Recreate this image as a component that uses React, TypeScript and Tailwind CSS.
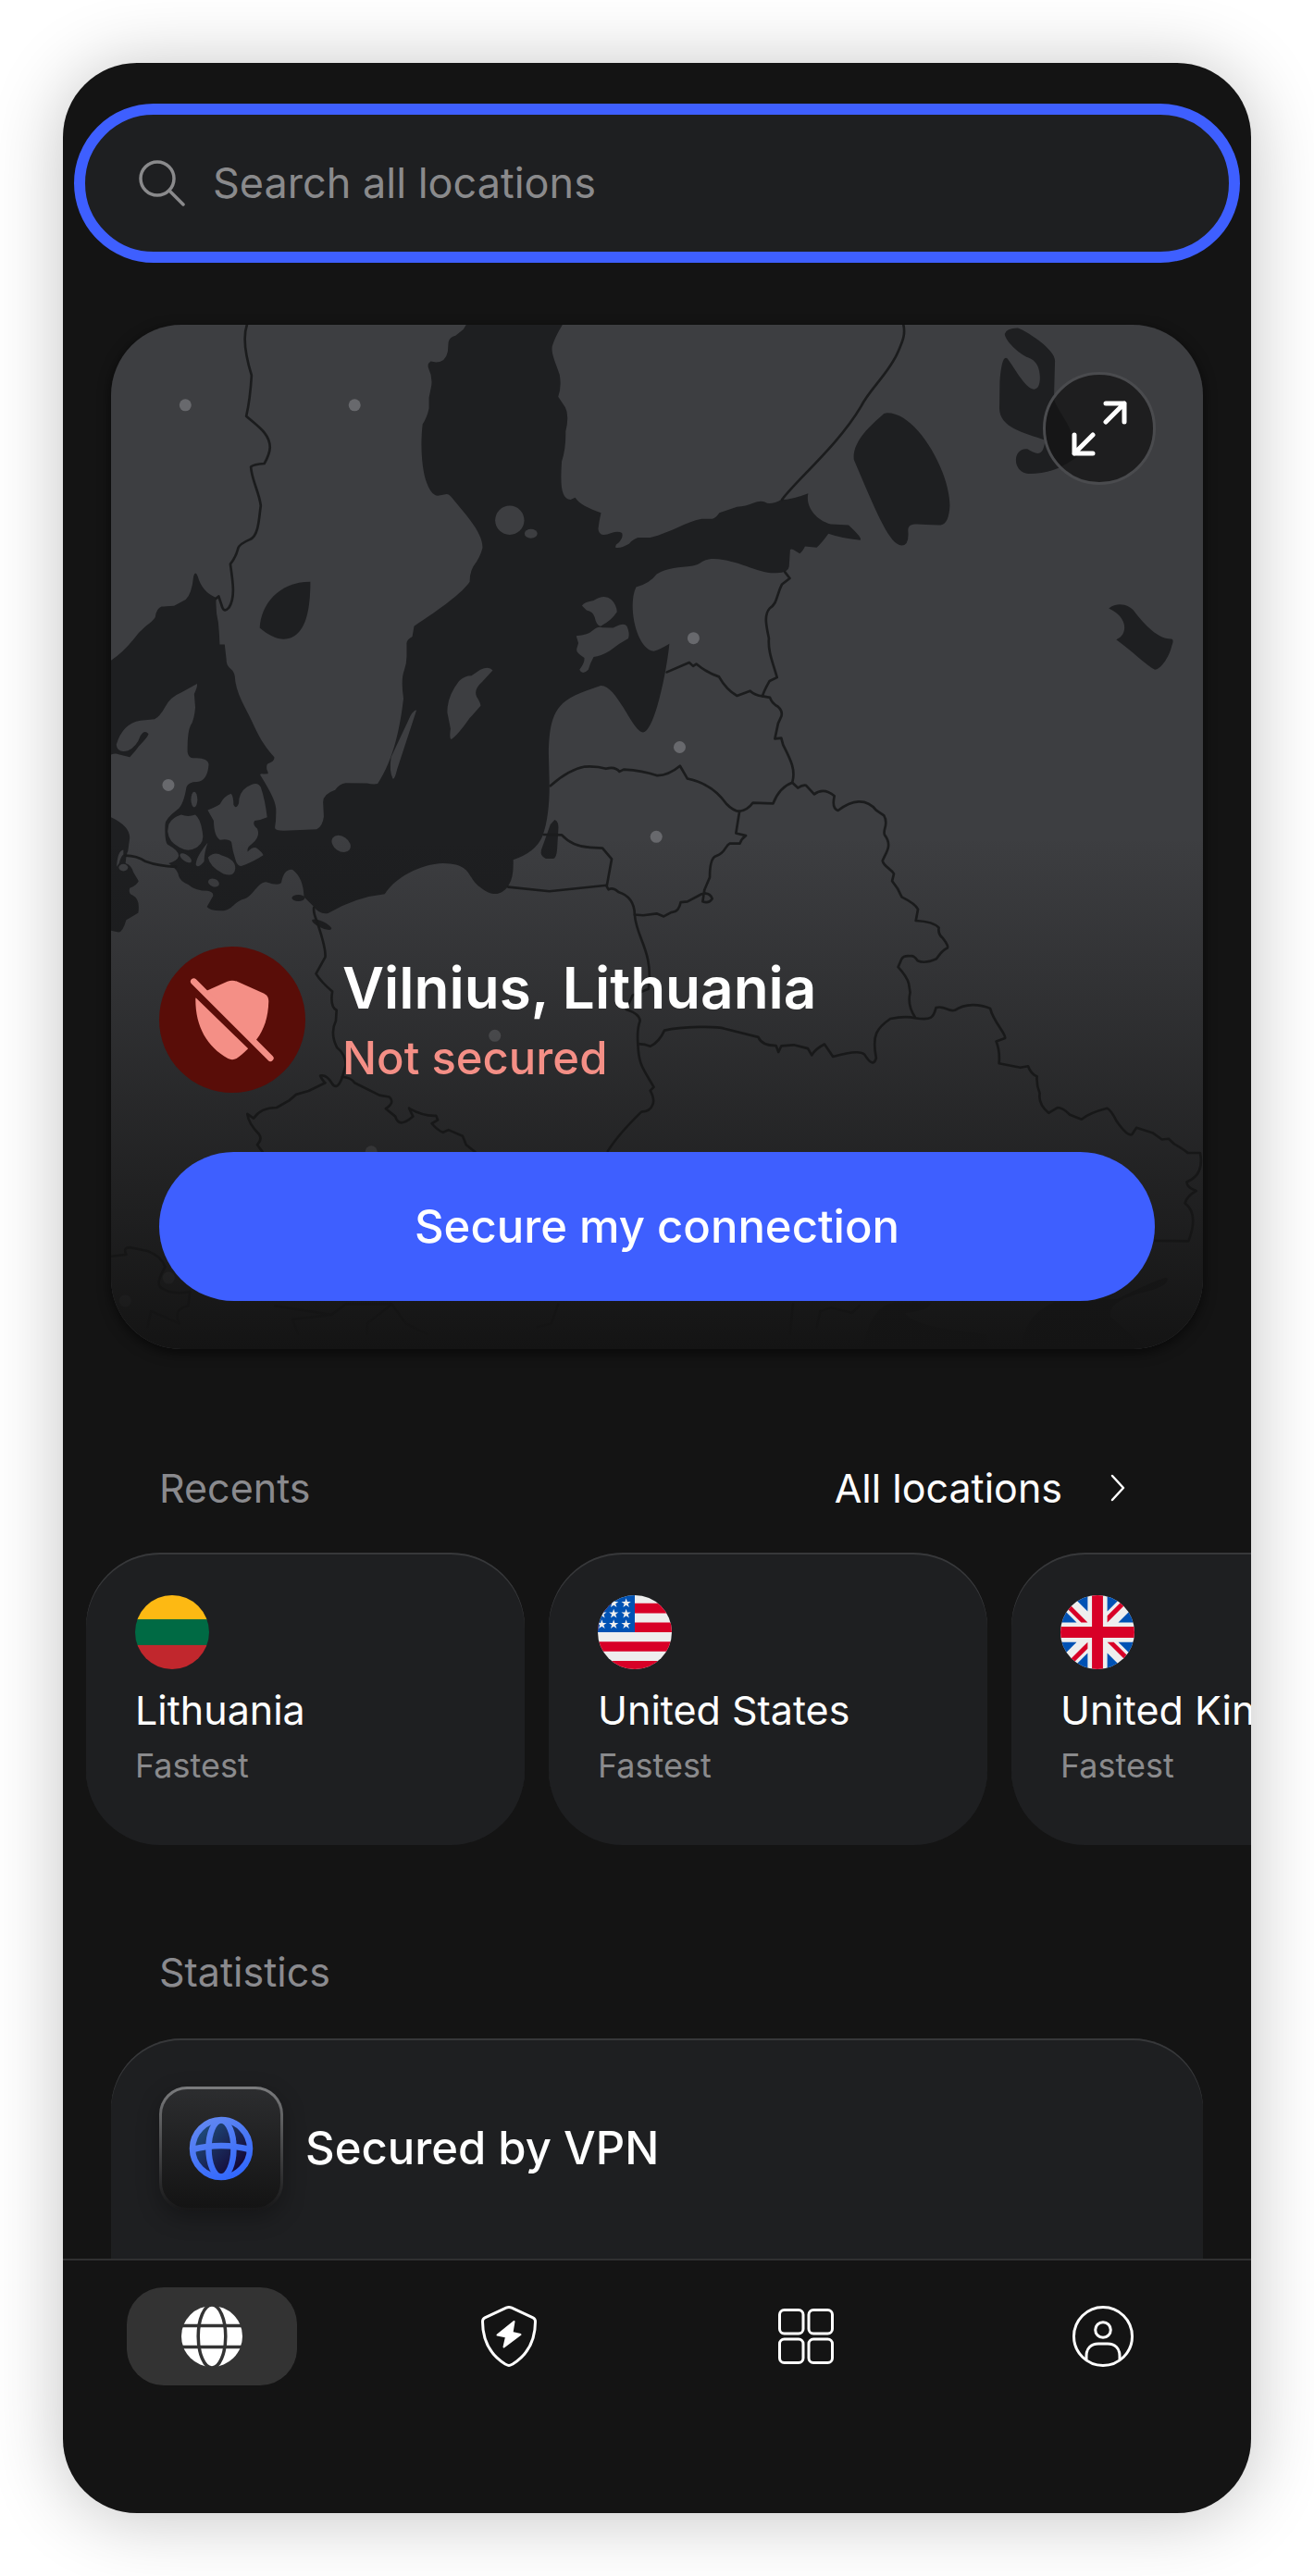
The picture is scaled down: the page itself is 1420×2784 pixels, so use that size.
import React from "react";

interface FlagProps {
  className?: string;
}

interface RecentLocation {
  name: string;
  detail: string;
  Flag: React.FC<FlagProps>;
}

const LithuaniaFlag: React.FC<FlagProps> = ({ className }) => (
  <svg viewBox="0 0 512 512" className={className} aria-hidden="true">
    <rect width="512" height="170" fill="#fdb913" />
    <rect y="167" width="512" height="180" fill="#006a44" />
    <rect y="345" width="512" height="167" fill="#c1272d" />
  </svg>
);

const stars = [
  [28, 54],
  [110, 54],
  [196, 54],
  [28, 128],
  [110, 128],
  [196, 128],
  [28, 202],
  [110, 202],
  [196, 202],
];

const UnitedStatesFlag: React.FC<FlagProps> = ({ className }) => (
  <svg viewBox="0 0 512 512" className={className} aria-hidden="true">
    <rect width="512" height="512" fill="#eee" />
    <path
      fill="#d80027"
      d="M0 56h512v68H0zM0 188h512v68H0zM0 322h512v66H0zM0 454h512v58H0z"
    />
    <rect width="256" height="256" fill="#0052b4" />
    {stars.map(([x, y]) => (
      <path
        key={`${x}-${y}`}
        transform={`translate(${x} ${y})`}
        fill="#eee"
        d="M0-34 8-10h25L13 5l8 24L0 14l-21 15 8-24-20-15h25z"
      />
    ))}
  </svg>
);

const UnitedKingdomFlag: React.FC<FlagProps> = ({ className }) => (
  <svg viewBox="0 0 512 512" className={className} aria-hidden="true">
    <rect width="512" height="512" fill="#eee" />
    <path
      fill="#0052b4"
      d="M324 0v112L436 0ZM512 76 400 188h112zM0 188h112L0 76ZM76 0l112 112V0Zm112 512V400L76 512ZM0 436l112-112H0Zm512-112H400l112 112ZM436 512 324 400v112z"
    />
    <path
      fill="#d80027"
      d="M0 0v45l143 143h45L0 0zm218 0v218H0v76h218v218h76V294h218v-76H294V0h-76zm249 0L324 143v45L512 0h-45zM188 324 0 512h45l143-143v-45zm136 0 188 188v-45L369 324h-45z"
    />
  </svg>
);

const recents: RecentLocation[] = [
  { name: "Lithuania", detail: "Fastest", Flag: LithuaniaFlag },
  { name: "United States", detail: "Fastest", Flag: UnitedStatesFlag },
  { name: "United Kingdom", detail: "Fastest", Flag: UnitedKingdomFlag },
];

const serverDots = [
  [237, 256],
  [715, 256],
  [189, 1329],
  [1672, 914],
  [1633, 1222],
  [1567, 1475],
  [1111, 2037],
  [762, 2365],
  [190, 2721],
  [67, 2786],
];

const BalticMap = () => (
  <svg
    viewBox="27 29 3084 2893"
    preserveAspectRatio="xMidYMid slice"
    className="absolute inset-0 w-full h-full"
    aria-hidden="true"
  >
    <rect x="27" y="29" width="3084" height="2893" fill="#3d3e41" />
    <g fill="#1e1f21" strokeLinejoin="round">
      {/* Baltic sea with the gulfs */}
      <path
        d="M1030 29 1022 42 1000 60Q983 64 980 78L978 105Q972 135 945 135L930 132Q920 138 923 150 935 175 932 200L925 235V265Q920 290 907 310
        C900 370 905 430 915 465Q930 512 950 512L975 507Q982 507 990 518L1030 566C1060 603 1078 635 1076 660Q1070 685 1050 712 1040 730 1040 755
        C1020 785 960 830 883 880L878 910Q860 920 862 932L862 965Q862 985 855 1005 845 1030 853 1085C845 1150 830 1250 780 1325Q770 1328 750 1324
        L690 1323Q672 1325 660 1343 625 1355 626 1378L628 1418Q625 1445 608 1454L515 1458Q488 1458 490 1448 494 1425 493 1395
        C490 1370 475 1345 448 1300Q450 1295 458 1298L470 1297Q472 1295 467 1285 465 1270 472 1268 490 1262 488 1250C470 1230 450 1205 430 1160
        410 1115 385 1080 378 1035Q378 1010 364 1000 352 990 353 975L348 932H334Q333 900 330 870 322 840 324 800Q285 785 272 740 265 722 260 740
        255 790 238 805L205 823Q180 825 170 825 155 830 152 855 145 867 125 880 105 897 90 918 60 955 27 977V1243Q40 1238 48 1242L80 1250
        Q95 1235 105 1220 130 1195 133 1185 122 1170 110 1190 100 1220 75 1232 45 1240 42 1215 60 1155 110 1147L150 1143Q165 1135 180 1108
        195 1080 225 1068L270 1043Q272 1050 262 1072L265 1110Q262 1145 252 1160 242 1180 243 1235 245 1252 258 1253 300 1250 303 1270
        300 1318 270 1320 245 1320 240 1335 232 1385 215 1398 180 1425 180 1440 178 1490 187 1497 220 1515 218 1530 215 1543 190 1550
        L200 1558Q215 1570 218 1585 222 1600 245 1610 265 1628 300 1628 318 1632 315 1643L298 1673Q305 1685 345 1684
        C370 1680 375 1658 405 1650 430 1640 440 1605 465 1603Q500 1615 508 1605 515 1565 540 1568 570 1590 572 1645
        L600 1673Q615 1695 640 1691 720 1645 800 1637C830 1590 900 1552 965 1550 1050 1552 1030 1590 1070 1618 1110 1650 1135 1635 1150 1612
        Q1165 1590 1163 1540 1225 1520 1245 1475C1262 1430 1266 1370 1265 1320L1263 1240C1265 1100 1300 1085 1410 1048
        1455 1045 1500 1180 1530 1180 1560 1178 1595 1020 1604 930Q1580 945 1560 951C1510 945 1485 820 1510 770Q1550 758 1568 733
        C1600 715 1630 715 1670 710 1700 703 1695 690 1730 690 1800 693 1850 730 1900 730Q1940 732 1942 712L1945 665Q1948 660 1955 665
        L1972 675Q1980 670 1987 655L2020 658Q2035 645 2053 619 2090 632 2143 637 2150 632 2110 595L2060 592C2015 580 1988 540 1996 505
        Q1950 523 1920 523 1900 535 1880 533 1865 522 1840 533 1820 542 1795 543L1745 560Q1735 575 1725 577L1695 577
        C1650 585 1610 615 1550 630H1515Q1500 635 1490 648 1465 662 1452 658 1450 650 1460 645 1475 630 1470 617 1460 610 1440 617
        1405 632 1403 605 1405 585 1411 560C1370 545 1350 535 1338 517L1325 523C1300 520 1295 490 1300 415Q1312 380 1311 330 1322 285 1310 262
        L1290 232Q1300 205 1294 170C1280 130 1270 110 1273 90Q1280 65 1302 29Z"
      />
      {/* North sea shore */}
      <path d="M27 1420Q80 1445 80 1478L75 1515Q70 1525 68 1550 85 1555 90 1575L105 1600Q100 1612 80 1620 75 1635 88 1640 110 1650 104 1690 80 1705 70 1710 60 1745 48 1745L27 1740Z" />
      {/* Lakes and lagoons */}
      <path d="M590 755C500 755 450 820 447 885C470 905 495 917 515 917C575 915 590 840 590 755Z" />
      <path d="M1280 1427Q1293 1430 1290 1460L1287 1510Q1285 1537 1275 1537H1255Q1238 1530 1242 1513L1268 1440Z" />
      <ellipse cx="622" cy="1723" rx="30" ry="9" transform="rotate(25 622 1723)" />
      <ellipse cx="556" cy="1648" rx="18" ry="9" />
      <path d="M2218 278C2300 275 2395 440 2396 540Q2393 597 2365 595C2310 595 2278 583 2278 610Q2282 652 2260 652C2225 652 2185 550 2125 410C2120 360 2170 315 2210 280Z" />
      <path d="M2588 38C2620 50 2693 100 2693 130L2690 240C2710 290 2743 310 2758 400C2718 430 2678 450 2618 450C2570 445 2573 375 2615 380C2640 395 2660 405 2665 355C2608 335 2536 320 2536 265L2537 190C2540 150 2546 115 2558 124C2575 145 2610 211 2633 211C2648 212 2652 190 2650 170C2648 145 2638 130 2618 122C2590 110 2553 75 2551 55Q2555 38 2588 38Z" />
      <path d="M2845 830C2870 810 2905 820 2918 840C2960 895 2995 918 3022 916Q3030 918 3023 935C3015 970 2990 1003 2975 1003C2950 990 2910 950 2866 918C2900 905 2900 855 2845 830Z" />
      <path d="M2600 2922Q2600 2830 2690 2790L2870 2780Q2990 2720 3010 2720 3020 2745 2930 2765 2840 2790 2850 2830L2950 2922Z" />
      <path d="M2150 2922Q2170 2800 2240 2790H2340Q2350 2810 2270 2820 2290 2860 2500 2880V2922Z" />
    </g>
    {/* Islands */}
    <g fill="#3d3e41">
      <circle cx="1153" cy="581" r="41" />
      <ellipse cx="1213" cy="619" rx="18" ry="13" />
      <path d="M1105 1005Q1095 992 1070 1003L1045 1020Q1025 1020 1010 1035 975 1080 977 1125L986 1170Q982 1198 988 1200 1005 1190 1040 1140L1071 1105Q1070 1095 1060 1080 1050 1060 1075 1038Z" />
      <path d="M890 1117Q878 1118 865 1150L818 1250Q812 1290 823 1311 828 1315 835 1285Z" />
      <path d="M1357 822Q1365 812 1390 808 1420 788 1440 805 1455 820 1456 840 1440 865 1410 880 1398 880 1393 855 1388 838 1370 835Z" />
      <path d="M1341 908Q1375 905 1387 893 1400 880 1415 884L1445 885Q1475 868 1484 880 1493 900 1488 915 1460 930 1435 950 1410 965 1390 967 1380 985 1375 1003 1358 1020 1350 1003 1365 985 1364 970 1340 955 1342 945L1347 928Z" />
      <ellipse cx="677" cy="1495" rx="29" ry="21" transform="rotate(35 677 1495)" />
      <path d="M300 1400Q325 1390 335 1383 345 1360 366 1353 373 1360 373 1385 380 1400 388 1380 388 1350 410 1335 440 1315 450 1335 462 1370 468 1420 450 1428 433 1430 425 1440 440 1452 450 1475 425 1495 410 1505 413 1517 430 1500 440 1508 455 1520 457 1527 430 1545 395 1558 385 1558 380 1545 370 1515 367 1490 360 1480 335 1484 318 1475 317 1430Z" />
      <path d="M190 1440Q200 1420 225 1413 245 1420 265 1413 280 1425 285 1460 292 1490 270 1505 245 1520 220 1505 190 1490 187 1460Z" />
      <path d="M300 1492Q265 1535 267 1555 275 1565 290 1545 290 1520 300 1492Z" />
      <path d="M301 1533Q320 1515 340 1528 380 1540 378 1565 375 1590 345 1580 305 1560 301 1533Z" />
      <ellipse cx="262" cy="1370" rx="9" ry="22" />
      <ellipse cx="238" cy="1535" rx="19" ry="9" transform="rotate(35 238 1535)" />
      <ellipse cx="317" cy="1605" rx="16" ry="11" transform="rotate(20 317 1605)" />
      <path d="M62 1512Q45 1515 43 1560L50 1550Q55 1530 62 1525Z" />
      <ellipse cx="62" cy="1562" rx="13" ry="10" />
    </g>
    {/* Borders */}
    <g fill="none" stroke="#1b1c1d" strokeWidth="7" strokeLinejoin="round" strokeLinecap="round">
      <path d="M411 29C400 60 405 110 424 172Q420 240 409 287C440 315 475 335 476 375Q475 395 460 421 430 423 422 430C425 470 445 500 450 540 445 570 445 625 420 635Q390 648 386 660 380 685 364 705C372 760 378 800 360 828Q345 845 339 820L331 796 324 802" />
      <path d="M1268 1331Q1320 1285 1365 1277 1400 1275 1425 1283 1450 1275 1463 1291L1475 1285Q1530 1288 1568 1302 1600 1303 1634 1275L1655 1311C1700 1320 1735 1340 1765 1382Q1785 1403 1802 1403 1825 1400 1840 1379L1897 1381Q1915 1335 1951 1322" />
      <path d="M1597 1010 1660 983 1671 993 1680 987Q1710 1012 1744 1023 1765 1060 1795 1077L1832 1063Q1845 1075 1867 1078 1870 1065 1887 1035L1908 1025C1895 980 1882 950 1885 915 1878 880 1870 850 1887 830 1910 815 1905 795 1922 762L1944 745 1930 727" />
      <path d="M2265 29C2272 60 2260 80 2250 105 2225 165 2170 210 2145 260 2080 370 1960 470 1922 523" />
      <path d="M1867 1078 1888 1082Q1893 1098 1910 1107 1925 1120 1920 1135L1911 1155 1902 1198 1920 1196 1925 1215C1945 1255 1962 1285 1951 1322L1967 1337Q1980 1328 1990 1330L2013 1355Q2040 1335 2070 1360 2062 1395 2080 1401C2120 1370 2160 1365 2188 1400L2210 1415C2225 1440 2205 1455 2212 1470 2235 1500 2215 1520 2206 1543 2210 1560 2230 1565 2238 1580L2233 1600Q2250 1620 2260 1645 2300 1665 2306 1680L2300 1712Q2350 1715 2365 1732 2362 1750 2375 1760 2395 1785 2388 1790 2375 1795 2358 1820 2325 1835 2305 1825 2295 1810 2285 1812 2265 1810 2260 1820L2250 1843Q2275 1870 2280 1890L2284 1915Q2275 1950 2298 1985" />
      <path d="M1249 1469 1300 1470Q1330 1503 1380 1505L1415 1507 1441 1538 1427 1615 1432 1624Q1445 1617 1460 1631 1505 1645 1506 1695L1530 1697 1568 1692 1588 1700 1610 1688Q1630 1690 1636 1660L1655 1658 1695 1637Q1718 1630 1725 1650 1715 1665 1698 1658L1703 1625 1718 1590C1718 1560 1722 1535 1735 1530 1765 1520 1760 1500 1775 1494H1803Q1808 1480 1820 1472L1792 1465 1802 1403" />
      <path d="M1506 1695C1510 1760 1560 1800 1545 1905L1500 1923 1482 1963Q1520 1975 1521 1995 1512 2020 1515 2060C1517 2120 1530 2130 1560 2182L1550 2192Q1565 2220 1555 2235 1550 2250 1525 2252 1460 2315 1430 2363" />
      <path d="M1515 2060 1535 2062 1550 2067Q1575 2055 1590 2022C1640 2010 1740 2010 1760 2017L1855 2041Q1865 2065 1905 2065L1912 2083 1920 2066 1955 2063 1995 2073 2006 2092Q2015 2075 2042 2061L2066 2096Q2140 2075 2155 2090 2180 2130 2188 2100C2175 2035 2190 2015 2228 1989Q2270 1980 2298 1987C2345 1995 2350 1985 2357 1958 2380 1950 2390 1970 2410 1965 2440 1945 2480 1947 2510 1960 2520 2000 2555 2030 2552 2044L2527 2053Q2538 2080 2535 2115 2570 2122 2595 2127L2617 2123Q2625 2145 2642 2152 2640 2175 2650 2200 2645 2230 2675 2255L2700 2240Q2715 2240 2735 2260L2768 2273Q2790 2255 2840 2242 2850 2245 2868 2280 2900 2325 2911 2315L2923 2297 2970 2312 2995 2330 3014 2328 3030 2343Q3060 2360 3068 2368L3103 2368Q3115 2430 3065 2450 3065 2465 3092 2475 3065 2490 3060 2510 3100 2540 3070 2617L2970 2616" />
      <path d="M210 1560Q160 1558 125 1545 100 1528 68 1528" />
      <path d="M1149 1617 1265 1629 1427 1612" />
      <path d="M600 1675Q598 1690 608 1712C620 1750 635 1790 632 1815L606 1862Q620 1885 652 1912 645 1955 664 1965L662 1995Q645 2030 665 2070 690 2090 690 2120L680 2155Q665 2195 650 2170 635 2145 618 2150 625 2165 632 2170L585 2193 550 2203 530 2220 495 2240Q450 2240 430 2270L412 2258Q415 2285 445 2315 455 2330 440 2345L455 2365" />
      <path d="M680 2153Q705 2155 715 2170L785 2205 813 2210Q830 2225 803 2243L830 2265Q840 2300 880 2265 865 2235 870 2243 910 2265 945 2263L950 2275 933 2285Q950 2305 965 2310L980 2303 1020 2320 1030 2345 1055 2365" />
      <path d="M27 2660 70 2655Q60 2635 80 2635L130 2645Q170 2660 180 2690 150 2740 170 2750 200 2770 250 2760L245 2800Q200 2810 220 2850L175 2830 140 2815 130 2860" />
      <path d="M490 2800 650 2825 690 2795 820 2795 860 2850 920 2880M820 2795 750 2850V2880M650 2825 540 2838 555 2880M1290 2795 1270 2850 1230 2860M1953 2795 1945 2880M2020 2860 2030 2815 2060 2805 2120 2820 2140 2800" />
    </g>
    <g fill="#68696d">
      {serverDots.map(([x, y]) => (
        <circle key={`${x}-${y}`} cx={x} cy={y} r="17" />
      ))}
    </g>
  </svg>
);

const UnsecuredIcon = () => (
  <svg
    viewBox="165 320 414 414"
    className="w-[158px] h-[158px] shrink-0"
    aria-hidden="true"
  >
    <circle cx="372" cy="527" r="207" fill="#590d08" />
    <g fill="#f48f86">
      <path d="M298 446 358 419Q372 413 386 419L462 453Q475 460 475 474C474 520 462 555 441 583L434 588Z" />
      <path d="M270 466 417 609Q398 628 384 637 372 643 360 637C300 603 267 545 268 467Q268 464 270 466Z" />
    </g>
    <path
      d="M263 419 480 636"
      stroke="#f48f86"
      strokeWidth="18"
      strokeLinecap="round"
    />
  </svg>
);

const VpnGlobe = () => (
  <svg viewBox="0 0 70 70" className="w-[70px] h-[70px]" aria-hidden="true">
    <defs>
      <linearGradient id="globeFill" x1="0" y1="0" x2="1" y2="1">
        <stop offset="0.1" stopColor="#20507f" />
        <stop offset="0.9" stopColor="#130030" />
      </linearGradient>
      <linearGradient
        id="globeLine"
        x1="15"
        y1="0"
        x2="50"
        y2="70"
        gradientUnits="userSpaceOnUse"
      >
        <stop offset="0" stopColor="#6489ef" />
        <stop offset="1" stopColor="#2f66ff" />
      </linearGradient>
    </defs>
    <circle cx="35" cy="35" r="31" fill="url(#globeFill)" />
    <g fill="none" stroke="url(#globeLine)" strokeWidth="6.5">
      <circle cx="35" cy="35" r="31" />
      <ellipse cx="35" cy="35" rx="13.5" ry="30.5" />
      <path d="M4 36Q35 28 66 36" />
    </g>
  </svg>
);

const HomeIcon = () => (
  <svg viewBox="0 0 66 66" className="w-[66px] h-[66px]" aria-hidden="true">
    <circle cx="33" cy="33" r="33" fill="#fff" />
    <g fill="none" stroke="#333333" strokeWidth="3.5">
      <path d="M0 21.5h66M0 44.5h66" />
      <ellipse cx="33" cy="33" rx="14.8" ry="34" />
    </g>
  </svg>
);

const ThreatIcon = () => (
  <svg
    viewBox="0 0 60 66"
    className="w-[60px] h-[66px]"
    fill="none"
    stroke="#fff"
    strokeWidth="3"
    strokeLinejoin="round"
    aria-hidden="true"
  >
    <path d="M27 2.2Q30 1 33 2.2L56 12.8Q58.5 14 58.5 17C58.5 38 50 53 34 63 30 65 30 65 26 63 10 53 1.5 38 1.5 17Q1.5 14 4 12.8Z" />
    <path
      d="M35.5 17 17.5 31.5 27 33.5 24.5 44.5 42.5 31 33.5 29Z"
      fill="#fff"
      strokeWidth="2"
    />
  </svg>
);

const GridIcon = () => (
  <svg
    viewBox="0 0 60 60"
    className="w-[60px] h-[60px]"
    fill="none"
    stroke="#fff"
    strokeWidth="3"
    aria-hidden="true"
  >
    <rect x="1.5" y="1.5" width="25.5" height="25.5" rx="5" />
    <rect x="33" y="1.5" width="25.5" height="25.5" rx="5" />
    <rect x="1.5" y="33" width="25.5" height="25.5" rx="5" />
    <rect x="33" y="33" width="25.5" height="25.5" rx="5" />
  </svg>
);

const ProfileIcon = () => (
  <svg
    viewBox="0 0 66 66"
    className="w-[66px] h-[66px]"
    fill="none"
    stroke="#fff"
    strokeWidth="3"
    aria-hidden="true"
  >
    <circle cx="33" cy="33" r="31.5" />
    <circle cx="33" cy="26" r="8.3" />
    <path d="M15 58v-4c0-8 5-13 13-13h10c8 0 13 5 13 13v4" />
  </svg>
);

const tabs = [
  { label: "VPN", Icon: HomeIcon, active: true },
  { label: "Threat protection", Icon: ThreatIcon, active: false },
  { label: "Products", Icon: GridIcon, active: false },
  { label: "Profile", Icon: ProfileIcon, active: false },
];

const App = () => {
  return (
    <div className="w-full bg-white p-17 font-['Inter',sans-serif] text-white">
      <div className="w-full rounded-[80px] bg-[#141414] overflow-hidden shadow-[0_4px_80px_rgba(0,0,0,0.24)]">
        <header className="pt-11 px-3">
          <div className="h-[172px] pl-[58px] pr-12 flex items-center gap-[30px] rounded-full border-[12px] border-[#3e5fff] bg-[#1e1f21]">
            <svg
              viewBox="0 0 50 50"
              className="w-[50px] h-[50px] shrink-0"
              fill="none"
              stroke="#8a8a8c"
              strokeWidth="3.5"
              strokeLinecap="round"
              aria-hidden="true"
            >
              <circle cx="20" cy="20" r="18" />
              <path d="M33 33 48 48" />
            </svg>
            <input
              type="search"
              aria-label="Search all locations"
              placeholder="Search all locations"
              className="w-full bg-transparent text-[45px] leading-14 outline-none placeholder:text-[#8a8a8c]"
            />
          </div>
        </header>

        <main>
          <section className="relative mt-[67px] mx-13 min-h-[1107px] flex flex-col justify-end p-13 rounded-[76px] overflow-hidden shadow-[0_4px_14px_rgba(0,0,0,0.6)]">
            <BalticMap />
            <div className="absolute inset-0 bg-linear-to-b from-transparent from-50% to-[#141414]" />
            <button
              aria-label="Expand map"
              className="absolute top-[51px] right-[51px] w-[122px] h-[122px] flex items-center justify-center rounded-full border-3 border-[#4a4b4e] bg-[#141414]/75"
            >
              <svg
                viewBox="0 0 60 60"
                className="w-[60px] h-[60px]"
                fill="none"
                stroke="#fff"
                strokeWidth="5"
                strokeLinecap="round"
                strokeLinejoin="round"
                aria-hidden="true"
              >
                <path d="M37 3h20v20M57 3 37 23M3 37v20h20M3 57l20-20" />
              </svg>
            </button>
            <div className="relative flex items-center gap-10">
              <UnsecuredIcon />
              <div className="pt-1">
                <h1 className="text-[62px] leading-20 font-semibold">
                  Vilnius, Lithuania
                </h1>
                <p className="text-[49px] leading-18 font-medium text-[#f48f86]">
                  Not secured
                </p>
              </div>
            </div>
            <button className="relative mt-16 h-[161px] w-full rounded-full bg-[#3e5fff] text-[49px] font-medium">
              Secure my connection
            </button>
          </section>

          <section className="mt-[122px]">
            <div className="mx-26 flex items-center justify-between text-[43px] leading-14">
              <h2 className="text-[#8a8a8e]">Recents</h2>
              <a href="#locations" className="pr-8 flex items-center gap-13">
                All locations
                <svg
                  viewBox="0 0 16 30"
                  className="w-4 h-[30px]"
                  fill="none"
                  stroke="#fff"
                  strokeWidth="2.5"
                  strokeLinecap="round"
                  strokeLinejoin="round"
                  aria-hidden="true"
                >
                  <path d="M2 2 14 15 2 28" />
                </svg>
              </a>
            </div>
            <ul className="mt-[42px] ml-[25px] flex gap-[26px]">
              {recents.map(({ name, detail, Flag }) => (
                <li key={name} className="w-[474px] shrink-0">
                  <button className="w-full pt-[46px] pb-[62px] px-[53px] text-left rounded-[80px] bg-[#1e1f21] shadow-[inset_0_2px_0_#37383a]">
                    <Flag className="w-20 h-20 rounded-full" />
                    <span className="mt-4 block text-[43px] leading-14 whitespace-nowrap">
                      {name}
                    </span>
                    <span className="mt-2 block text-[36px] leading-12 text-[#8a8a8c]">
                      {detail}
                    </span>
                  </button>
                </li>
              ))}
            </ul>
          </section>

          <section className="mt-[109px]">
            <h2 className="mx-26 text-[43px] leading-14 text-[#8a8a8e]">
              Statistics
            </h2>
            <div className="mt-11 mx-13 p-13 flex items-center gap-6 rounded-t-[76px] bg-[#1e1f21] shadow-[inset_0_2px_0_#37383a]">
              <div className="w-[134px] h-[134px] shrink-0 p-[3px] rounded-[30px] bg-linear-to-b from-[#7b7c7e] to-[#171718] shadow-[0_8px_24px_rgba(0,0,0,0.3)]">
                <div className="w-full h-full flex items-center justify-center rounded-[27px] bg-linear-to-b from-[#2c2d2f] to-[#141414]">
                  <VpnGlobe />
                </div>
              </div>
              <p className="text-[49px] leading-15 font-medium">
                Secured by VPN
              </p>
            </div>
          </section>
        </main>

        <nav className="pt-[29px] pb-[138px] grid grid-cols-4 justify-items-center border-t-2 border-[#303031]">
          {tabs.map(({ label, Icon, active }) => (
            <button
              key={label}
              aria-label={label}
              className={`w-[184px] h-[106px] flex items-center justify-center rounded-[40px] ${
                active ? "bg-[#333333]" : ""
              }`}
            >
              <Icon />
            </button>
          ))}
        </nav>
      </div>
    </div>
  );
};

export default App;
